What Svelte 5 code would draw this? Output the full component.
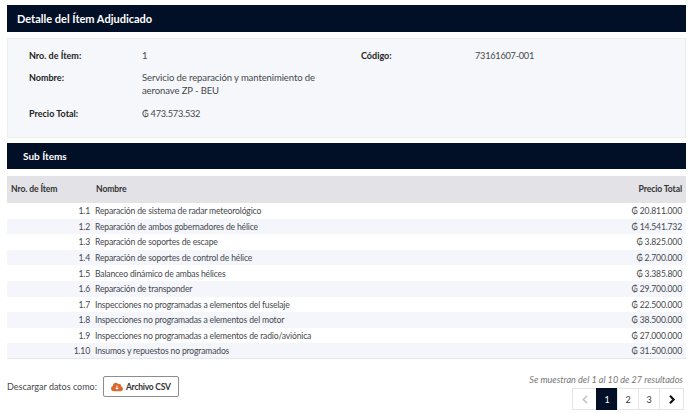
<script>
  const items = [
    ["1.1", "Reparación de sistema de radar meteorológico", "20.811.000"],
    ["1.2", "Reparación de ambos gobernadores de hélice", "14.541.732"],
    ["1.3", "Reparación de soportes de escape", "3.825.000"],
    ["1.4", "Reparación de soportes de control de hélice", "2.700.000"],
    ["1.5", "Balanceo dinámico de ambas hélices", "3.385.800"],
    ["1.6", "Reparación de transponder", "29.700.000"],
    ["1.7", "Inspecciones no programadas a elementos del fuselaje", "22.500.000"],
    ["1.8", "Inspecciones no programadas a elementos del motor", "38.500.000"],
    ["1.9", "Inspecciones no programadas a elementos de radio/aviónica", "27.000.000"],
    ["1.10", "Insumos y repuestos no programados", "31.500.000"],
  ];
</script>

<div class="page">
  <h2 class="bar first">Detalle del Ítem Adjudicado</h2>

  <section class="card">
    <div class="row">
      <b class="k">Nro. de Ítem:</b>
      <span class="v">1</span>
      <b class="k2">Código:</b>
      <span class="digits">73161607-001</span>
    </div>
    <div class="row tall">
      <b class="k">Nombre:</b>
      <span class="v">Servicio de reparación y mantenimiento de aeronave ZP - BEU</span>
    </div>
    <div class="row">
      <b class="k">Precio Total:</b>
      <span class="v digits">₲ 473.573.532</span>
    </div>
  </section>

  <h2 class="bar second">Sub Ítems</h2>

  <table>
    <thead>
      <tr>
        <th class="num">Nro. de Ítem</th>
        <th class="name">Nombre</th>
        <th class="price">Precio Total</th>
      </tr>
    </thead>
    <tbody>
      {#each items as item}
        <tr>
          <td class="n">{item[0]}</td>
          <td class="d">{item[1]}</td>
          <td class="price">₲ {item[2]}</td>
        </tr>
      {/each}
    </tbody>
  </table>

  <div class="foot">
    <div class="download">
      <span>Descargar datos como:</span>
      <button class="csv">
        <svg width="12" height="10" viewBox="0 0 640 512">
          <path fill="#d9682c" d="M537.600 226.600c4.100-10.700 6.400-22.400 6.400-34.600 0-53-43-96-96-96-19.700 0-38.100 6-53.300 16.200C367 64.200 315.300 32 256 32c-88.400 0-160 71.600-160 160 0 2.700.1 5.400.2 8.100C40.200 219.800 0 273.200 0 336c0 79.500 64.500 144 144 144h368c70.700 0 128-57.300 128-128 0-61.900-44-113.600-102.400-125.400zM404.700 320.700l-73.400 73.400c-6.200 6.200-16.400 6.200-22.600 0l-73.400-73.400c-10.100-10.100-2.900-27.300 11.300-27.300H296V208c0-8.800 7.200-16 16-16h16c8.800 0 16 7.200 16 16v85.400h49.400c14.200 0 21.400 17.200 11.300 27.300z"/>
        </svg>
        Archivo CSV
      </button>
    </div>
    <div class="paging">
      <em>Se muestran del 1 al 10 de 27 resultados</em>
      <div class="pager">
        <span class="pg wide">
          <svg width="8" height="9" viewBox="0 0 9 11"><path d="M7 1 2.500 5.500 7 10" fill="none" stroke="#c4c6c9" stroke-width="2"/></svg>
        </span>
        <span class="pg on">1</span>
        <span class="pg">2</span>
        <span class="pg">3</span>
        <span class="pg wide">
          <svg width="8" height="9" viewBox="0 0 9 11"><path d="M2 1 6.500 5.500 2 10" fill="none" stroke="#111" stroke-width="2.600"/></svg>
        </span>
      </div>
    </div>
  </div>
</div>

<style>
  :global(body) {
    background: #fff;
  }

  .page {
    width: 679px;
    margin-left: 7px;
    padding-top: 5px;
    font-family: Lato, "Noto Sans", sans-serif;
    font-size: 9px;
    color: #45484d;
  }

  .bar {
    margin: 0;
    height: 27px;
    line-height: 27px;
    background: #021027;
    color: #fff;
    font-size: 10px;
    font-weight: 700;
  }

  .first {
    padding-left: 10px;
    font-size: 11px;
  }

  .second {
    margin-top: 5px;
    height: 26px;
    line-height: 26px;
    padding-left: 16px;
  }

  .card {
    margin-top: 6px;
    height: 100px;
    box-sizing: border-box;
    padding: 10px 0 0 21px;
    background: #f6f7fa;
    border: 1px solid #eceded;
    line-height: 13px;
    font-size: 9.5px;
    letter-spacing: -0.1px;
  }

  .row {
    display: flex;
    margin-bottom: 9px;
  }

  .row.tall {
    margin-bottom: 10px;
  }

  .k {
    width: 113px;
    color: #222;
    font-size: 9px;
    letter-spacing: 0;
  }

  .v {
    box-sizing: border-box;
    width: 219px;
    padding-right: 30px;
  }

  .k2 {
    width: 114px;
    color: #222;
    font-size: 9px;
    letter-spacing: 0;
  }

  .digits {
    font-size: 9.2px;
    letter-spacing: -0.25px;
  }

  table {
    margin-top: 7px;
    width: 100%;
    border-collapse: collapse;
    table-layout: fixed;
    border-bottom: 1px solid #e6e7e9;
  }

  th {
    box-sizing: border-box;
    height: 27px;
    padding: 0 4px 2px;
    background: #e2e2e7;
    color: #333;
    font-size: 8.6px;
    letter-spacing: -0.1px;
    font-weight: 700;
    text-align: left;
  }

  th.num {
    width: 83px;
  }

  th.name {
    padding-left: 6px;
  }

  th.price {
    width: 120px;
    text-align: right;
  }

  td {
    box-sizing: border-box;
    height: 15.6px;
    padding: 1px 4px 0;
    line-height: 14px;
    font-size: 8.6px;
    letter-spacing: -0.17px;
  }

  tbody tr:nth-child(even) {
    background: #f4f6fb;
  }

  td.n {
    text-align: right;
    padding-right: 0;
  }

  td.d {
    padding-left: 5px;
    white-space: nowrap;
  }

  td.price {
    text-align: right;
  }

  .foot {
    display: flex;
    justify-content: space-between;
    margin-top: 10px;
  }

  .download {
    display: flex;
    align-items: center;
    gap: 6px;
    align-self: flex-start;
    margin-top: 7px;
  }

  .csv {
    display: flex;
    align-items: center;
    gap: 3px;
    height: 21px;
    width: 76px;
    padding: 0 7px;
    background: #fff;
    border: 1px solid #8b8d90;
    border-radius: 2px;
    font: 700 8.5px Lato, sans-serif;
    letter-spacing: -0.25px;
    color: #333;
    white-space: nowrap;
  }

  .csv svg {
    flex-shrink: 0;
  }

  .paging {
    display: flex;
    flex-direction: column;
    align-items: flex-end;
    gap: 3px;
    padding-top: 5px;
  }

  em {
    color: #777;
    font-size: 9.1px;
    margin-right: 3px;
  }

  .pager {
    display: flex;
    margin-right: 2px;
  }

  .pg {
    display: flex;
    align-items: center;
    justify-content: center;
    width: 22px;
    height: 22px;
    box-sizing: border-box;
    background: #fff;
    border: 1px solid #e4e5e7;
    margin-left: -1px;
    color: #333;
  }

  .pg.wide {
    width: 25px;
  }

  .pg.on {
    background: #021027;
    border-color: #021027;
    color: #fff;
  }
</style>
